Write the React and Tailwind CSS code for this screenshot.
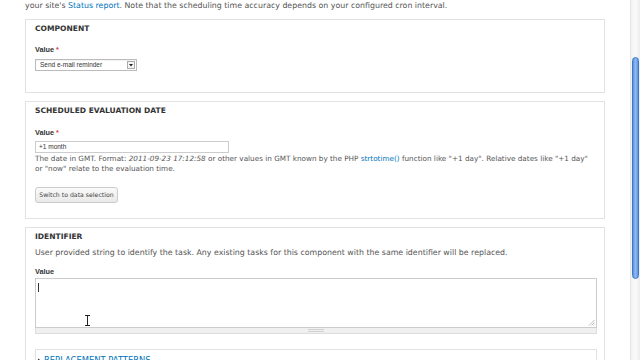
import React from "react";

function Fieldset({ className = "", children }) {
  return (
    <div className={`border border-[#e2e2e2] pl-[9px] pr-[7px] ${className}`}>{children}</div>
  );
}

export default function App() {
  return (
    <div className="w-[640px] h-[360px] overflow-hidden bg-white flex font-['DejaVu_Sans',sans-serif] text-[#555] relative">
      <div className="w-[630px] pl-[25px] pr-[25px] shrink-0">
        <div className="h-[11px] text-[7.85px] leading-[11px] whitespace-nowrap">
          your site's <span className="text-[#0074bd]">Status report</span>. Note that the scheduling time accuracy depends on your configured cron interval.
        </div>

        {/* Component */}
        <Fieldset className="mt-[8px] h-[74px]">
          <div className="mt-[4px] h-[10px] text-[7.55px] leading-[10px] font-bold text-[#333] uppercase">Component</div>
          <div className="mt-[11px] h-[10px] font-['Liberation_Sans',sans-serif] text-[7.3px] leading-[10px] font-bold text-[#333]">
            Value <span className="text-[#d33]">*</span>
          </div>
          <div className="mt-[4px] h-[12px] w-[102px] border border-[#bbb] bg-white flex items-center justify-between pl-[4px] pr-[1px] shadow-[inset_0_1px_1px_rgba(0,0,0,0.06)]">
            <span className="font-['Liberation_Sans',sans-serif] text-[6.5px] leading-[10px] text-[#333]">Send e-mail reminder</span>
            <span className="w-[8px] h-[8px] border border-[#aaa] bg-[#f4f4f4] flex items-center justify-center">
              <svg width="4" height="4" viewBox="0 0 4 4"><path d="M0 1 L4 1 L2 3.5 Z" fill="#222" /></svg>
            </span>
          </div>
        </Fieldset>

        {/* Scheduled evaluation date */}
        <Fieldset className="mt-[8px] h-[118px]">
          <div className="mt-[4px] h-[10px] text-[7.55px] leading-[10px] font-bold text-[#333] uppercase">Scheduled evaluation date</div>
          <div className="mt-[12px] h-[10px] font-['Liberation_Sans',sans-serif] text-[7.3px] leading-[10px] font-bold text-[#333]">
            Value <span className="text-[#d33]">*</span>
          </div>
          <div className="mt-[3px] h-[12px] w-[194px] border border-[#ccc] bg-white flex items-center pl-[3px]">
            <span className="font-['Liberation_Sans',sans-serif] text-[6.5px] leading-[10px] text-[#333]">+1 month</span>
          </div>
          <div className="mt-[1px] text-[7.25px] leading-[10px] whitespace-nowrap">
            <div>
              The date in GMT. Format: <em>2011-09-23 17:12:58</em> or other values in GMT known by the PHP <span className="text-[#0074bd]">strtotime()</span> function like "+1 day". Relative dates like "+1 day"
            </div>
            <div>or "now" relate to the evaluation time.</div>
          </div>
          <div className="mt-[13px] h-[16px] w-[83px] border border-[#ccc] rounded-[3px] bg-gradient-to-b from-[#fafafa] to-[#e9e9e9] flex items-center justify-center text-[6.2px] text-[#444] whitespace-nowrap">
            Switch to data selection
          </div>
        </Fieldset>

        {/* Identifier */}
        <Fieldset className="mt-[8px] h-[200px]">
          <div className="mt-[4px] h-[10px] text-[7.55px] leading-[10px] font-bold text-[#333] uppercase">Identifier</div>
          <div className="mt-[6px] h-[10px] text-[7.85px] leading-[10px] whitespace-nowrap">
            User provided string to identify the task. Any existing tasks for this component with the same identifier will be replaced.
          </div>
          <div className="mt-[9px] h-[10px] font-['Liberation_Sans',sans-serif] text-[7.3px] leading-[10px] font-bold text-[#333]">Value</div>
          <div className="mt-[1px] w-[562px]">
            <div className="h-[50px] border border-[#ccc] bg-white relative">
              <div className="absolute left-[2px] top-[4px] w-px h-[9px] bg-[#333]" />
              <svg className="absolute right-[1px] bottom-[1px]" width="7" height="7" viewBox="0 0 7 7">
                <path d="M6.5 1 L1 6.5 M6.5 3.5 L3.5 6.5 M6.5 5.5 L5.5 6.5" stroke="#aaa" strokeWidth="0.8" />
              </svg>
            </div>
            <div className="h-[6px] bg-[#f0f0f0] border border-t-0 border-[#ddd] flex justify-center items-center">
              <div className="w-[16px] h-[3px] border-y border-[#d0d0d0]" />
            </div>
          </div>
          <div className="mt-[15px] border border-[#e2e2e2] h-[40px] pl-[1px] pt-[5px] flex items-start gap-[2px] text-[#0074bd] text-[8.4px] leading-[10px] uppercase">
            <svg className="mt-[3px]" width="5" height="5" viewBox="0 0 5 5"><path d="M1 0.5 L4 2.5 L1 4.5 Z" fill="#333" /></svg>
            <span>Replacement patterns</span>
          </div>
        </Fieldset>
      </div>

      {/* scrollbar */}
      <div className="w-[10px] h-[360px] bg-gradient-to-r from-[#f2f2f2] via-[#fafafa] to-[#ececec] border-l border-[#e6e6e6] pt-[57px] pl-px">
        <div className="w-[7px] h-[222px] rounded-full bg-gradient-to-r from-[#5b95dd] via-[#8fbaf0] to-[#5b95dd] border border-[#3f78c6]" />
      </div>

      {/* mouse I-beam cursor */}
      <svg className="absolute left-[84px] top-[315px]" width="7" height="11" viewBox="0 0 7 11">
        <path d="M1 0.5 H6 M3.5 0.5 V10.5 M1 10.5 H6" stroke="#222" strokeWidth="1" fill="none" />
      </svg>
    </div>
  );
}
